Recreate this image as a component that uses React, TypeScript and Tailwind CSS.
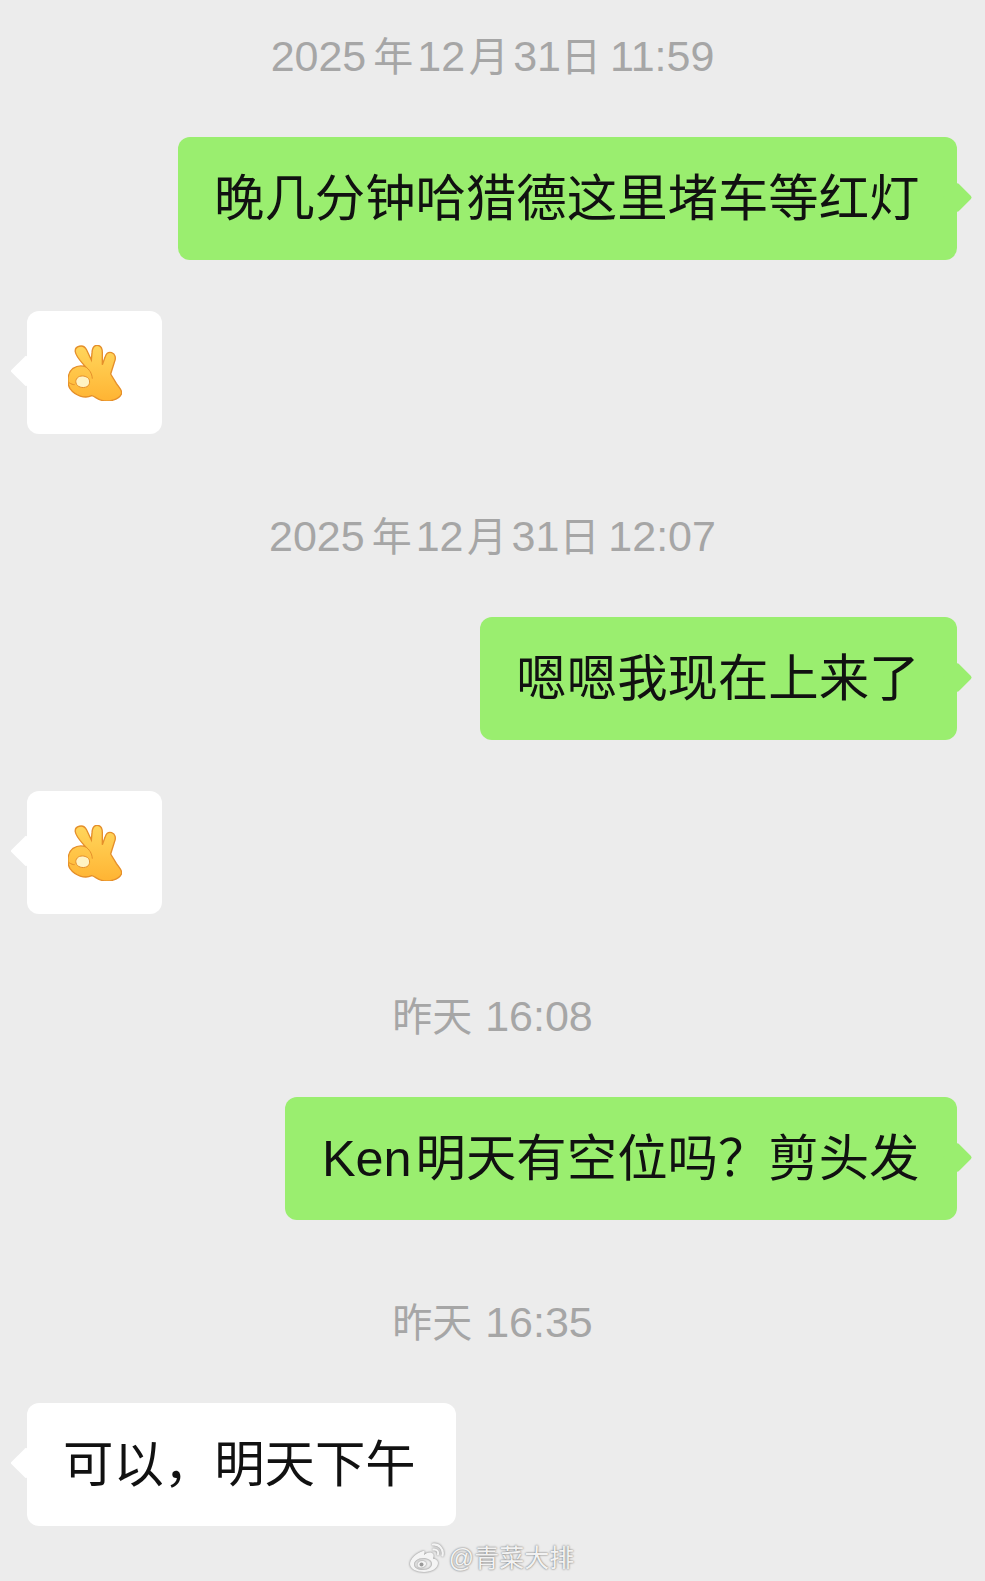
import React from "react";

const font = { fontFamily: '"Liberation Sans", "Noto Sans CJK SC", sans-serif' };

function OkHand() {
  return (
    <svg width="54" height="56" viewBox="205 167 160 168" className="block">
      <defs>
        <linearGradient id="okg" x1="0" y1="0" x2="0" y2="1">
          <stop offset="0" stopColor="#ffd65c" />
          <stop offset="1" stopColor="#ffb433" />
        </linearGradient>
      </defs>
      <path
        fill="url(#okg)"
        stroke="#e58f2a"
        strokeWidth="4"
        d="M226 188C223 170 250 162 260 182L274 212L276 190C277 175 283 168 291 168C302 168 307 178 307 190L307 226L315 204C319 191 328 188 335 190C346 193 348 206 344 216L332 254L349 282C357 294 369 304 364 315C356 332 325 339 305 333C290 329 285 321 275 319C255 329 225 319 210 298C199 278 203 250 219 237C230 230 245 228 256 232C245 218 229 204 226 188Z"
      />
      <path d="M256 232C268 240 276 252 277 268" fill="none" stroke="#e58f2a" strokeWidth="3" />
      <path d="M207 280C214 284 218 286 224 286" fill="none" stroke="#e58f2a" strokeWidth="3" />
      <path d="M248 260C234 259 225 270 228 281C231 293 248 298 261 292C271 286 271 271 263 265C258 262 253 260 248 260Z" fill="#fff3c4" stroke="#e58f2a" strokeWidth="3" />
    </svg>
  );
}

function WeiboLogo() {
  return (
    <svg width="36" height="30" viewBox="0 0 36 30" className="block [filter:drop-shadow(0_0_1px_rgba(0,0,0,0.5))]">
      <path
        fill="#f4f4f4"
        fillRule="evenodd"
        d="M14 8C7 10 1 16 1 21C1 26 8 29 15 29C23 29 29 25 29 20C29 17 26 16 24 15.500C25 13 25 11 23 10C20 9 17 10 15 12C16 9 16 7.500 14 8ZM14 15C9 15 5 18 5 21.500C5 25 9 27 14 27C19 27 23 24 23 21C23 17.500 19 15 14 15ZM13 18C10 18 8.500 20 8.500 22C8.500 24 11 25 13 24.500C16 24 17.500 22 17 20C16.500 18.500 15 18 13 18Z"
      />
      <circle cx="12.500" cy="21.500" r="2" fill="#9a9a9a" />
      <path d="M24 1.500C30 1 35 6 33.500 12.500" fill="none" stroke="#f4f4f4" strokeWidth="2.200" strokeLinecap="round" />
      <path d="M24.500 6.500C27.500 6 30 8.500 29 11.500" fill="none" stroke="#f4f4f4" strokeWidth="2" strokeLinecap="round" />
    </svg>
  );
}

function Time({ children, className }: { children: React.ReactNode; className: string }) {
  return (
    <div className={`h-[48px] flex items-center justify-center text-[#a6a6a6] whitespace-pre ${className}`}>
      <span className="text-[43px] leading-[48px]">{children}</span>
    </div>
  );
}

function FullDate({ time }: { time: string }) {
  return (
    <>
      2025
      <span className="text-[40px] ml-[7px] mr-[4px]">年</span>
      12
      <span className="text-[40px] ml-[3.500px] mr-[4.500px]">月</span>
      31
      <span className="text-[40px] mr-[-3px]">日</span>
      {" " + time}
    </>
  );
}

function Sent({ children, className }: { children: React.ReactNode; className: string }) {
  return (
    <div className={`flex justify-end pr-[28px] ${className}`}>
      <div className="relative h-[123px] pl-[36.500px] pr-[37.500px] flex items-center rounded-[12px] bg-[#9aee6f] text-[50.400px] text-[#111111] whitespace-nowrap">
        {children}
        <span className="absolute right-[-10.500px] top-[50px] w-[21px] h-[21px] rotate-45 rounded-[2px] bg-[#9aee6f]" />
      </div>
    </div>
  );
}

function Received({ children, className }: { children: React.ReactNode; className: string }) {
  return (
    <div className={`flex justify-start pl-[27px] ${className}`}>
      <div className="relative h-[123px] pl-[36px] pr-[40px] flex items-center justify-center rounded-[12px] bg-white text-[50.400px] text-[#111111] whitespace-nowrap">
        {children}
        <span className="absolute left-[-12px] top-[49px] w-[22px] h-[22px] rotate-45 rounded-[1px] bg-white" />
      </div>
    </div>
  );
}

export default function App() {
  return (
    <div style={font} className="w-[985px] h-[1581px] overflow-hidden bg-[#ececec] pt-[32px] flex flex-col">
      <Time className="">
        <FullDate time="11:59" />
      </Time>
      <Sent className="mt-[57px]">晚几分钟哈猎德这里堵车等红灯</Sent>
      <Received className="mt-[51px]">
        <div className="w-[59px] pl-[5px] flex justify-start"><OkHand /></div>
      </Received>
      <Time className="mt-[78px]">
        <FullDate time="12:07" />
      </Time>
      <Sent className="mt-[57px]">嗯嗯我现在上来了</Sent>
      <Received className="mt-[51px]">
        <div className="w-[59px] pl-[5px] flex justify-start"><OkHand /></div>
      </Received>
      <Time className="mt-[78px]">
        <span className="text-[40px] mr-[1px]">昨天</span> 16:08
      </Time>
      <Sent className="mt-[57px]">
        <span className="mr-[4px]">Ken</span>明天有空位吗？剪头发
      </Sent>
      <Time className="mt-[78px]">
        <span className="text-[40px] mr-[1px]">昨天</span> 16:35
      </Time>
      <Received className="mt-[57px]">可以，明天下午</Received>
      <div className="mt-[15px] flex items-center justify-center gap-[4px] pr-[2px]">
        <WeiboLogo />
        <span className="text-[25px] leading-[34px] text-[#f2f2f2] [text-shadow:0_0_2px_rgba(0,0,0,0.65)]">@青菜大排</span>
      </div>
    </div>
  );
}
